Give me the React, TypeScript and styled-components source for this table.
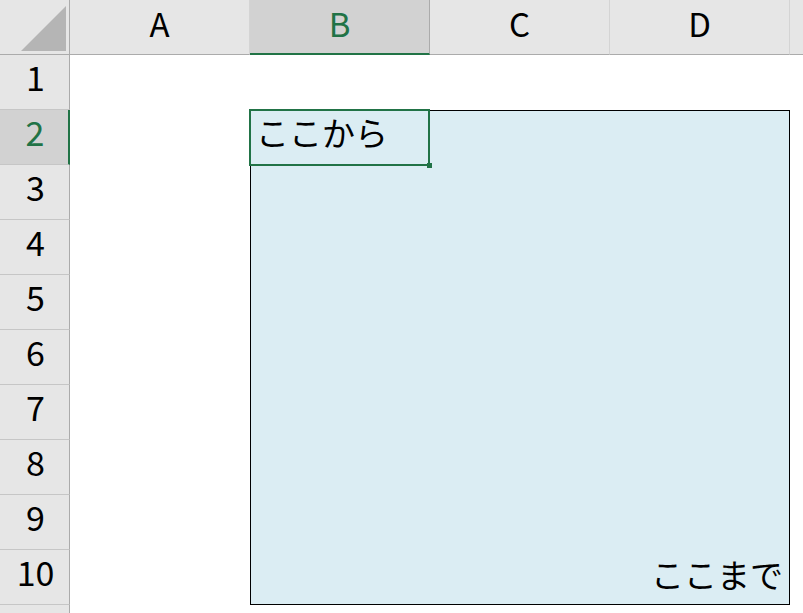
import React from "react";
import styled, { createGlobalStyle } from "styled-components";

const GREEN = "#217346";

const Global = createGlobalStyle`
  html, body { margin: 0; padding: 0; background: #ffffff; overflow: hidden; }
  body { font-family: "Noto Sans CJK JP", "Noto Sans", sans-serif; }
`;

const Sheet = styled.div`
  display: grid;
  grid-template-columns: 70px repeat(5, 180px);
  grid-template-rows: repeat(12, 55px);
  width: 803px;
  height: 613px;
  overflow: hidden;
  background: #ffffff;
  font-size: 32px;
  color: #000;
`;

const Corner = styled.div`
  grid-column: 1;
  grid-row: 1;
  background: #e6e6e6;
  border-right: 1px solid #ababab;
  border-bottom: 1px solid #ababab;
  box-sizing: border-box;
  display: flex;
  align-items: flex-end;
  justify-content: flex-end;
  padding: 0 3px 3px 0;
`;

const ColHeader = styled.div<{ $col: number; $active?: boolean }>`
  grid-column: ${(p) => p.$col};
  grid-row: 1;
  box-sizing: border-box;
  background: ${(p) => (p.$active ? "#d2d2d2" : "#e6e6e6")};
  color: ${(p) => (p.$active ? GREEN : "#000")};
  border-right: 1px solid ${(p) => (p.$active ? "#ababab" : "#d4d4d4")};
  border-bottom: ${(p) => (p.$active ? `2px solid ${GREEN}` : "1px solid #ababab")};
  display: flex;
  align-items: center;
  justify-content: center;
  padding-bottom: 7px;
  font-size: 33px;
  line-height: 1;
`;

const RowHeader = styled.div<{ $row: number; $active?: boolean }>`
  grid-column: 1;
  grid-row: ${(p) => p.$row};
  box-sizing: border-box;
  background: ${(p) => (p.$active ? "#d2d2d2" : "#e6e6e6")};
  color: ${(p) => (p.$active ? GREEN : "#000")};
  border-right: ${(p) => (p.$active ? `2px solid ${GREEN}` : "1px solid #ababab")};
  border-bottom: 1px solid #c6c6c6;
  display: flex;
  align-items: center;
  justify-content: center;
  padding-bottom: 10px;
  padding-left: 2px;
  font-size: 34px;
  line-height: 1;
`;

const Box = styled.div`
  grid-column: 3 / 6;
  grid-row: 3 / 12;
  box-sizing: border-box;
  background: #dbedf3;
  border: 1px solid #000;
`;

const Selection = styled.div`
  grid-column: 3 / 4;
  grid-row: 3 / 4;
  position: relative;
  box-sizing: border-box;
  margin: -1px 0 -1px -1px;
  border: 2px solid ${GREEN};
  display: flex;
  align-items: center;
  padding-left: 5px;
  padding-bottom: 10px;
  font-size: 33px;
  line-height: 1;
  white-space: nowrap;
`;

const Handle = styled.span`
  position: absolute;
  right: -4px;
  bottom: -4px;
  width: 5px;
  height: 5px;
  background: ${GREEN};
`;

const EndCell = styled.div`
  grid-column: 5 / 6;
  grid-row: 11 / 12;
  display: flex;
  align-items: center;
  justify-content: flex-end;
  padding-right: 7px;
  padding-bottom: 6px;
  font-size: 33px;
  line-height: 1;
  white-space: nowrap;
`;

const cols = ["A", "B", "C", "D", ""];

export default function App() {
  return (
    <>
      <Global />
      <Sheet>
        <Corner>
          <svg width="45" height="45" viewBox="0 0 45 45">
            <polygon points="0,45 45,45 45,0" fill="#b5b5b5" />
          </svg>
        </Corner>
        {cols.map((c, i) => (
          <ColHeader key={i} $col={i + 2} $active={c === "B"}>
            {c}
          </ColHeader>
        ))}
        {Array.from({ length: 11 }, (_, i) => (
          <RowHeader key={i} $row={i + 2} $active={i + 1 === 2}>
            {i + 1 <= 10 ? i + 1 : ""}
          </RowHeader>
        ))}
        <Box />
        <Selection>
          ここから
          <Handle />
        </Selection>
        <EndCell>ここまで</EndCell>
      </Sheet>
    </>
  );
}
